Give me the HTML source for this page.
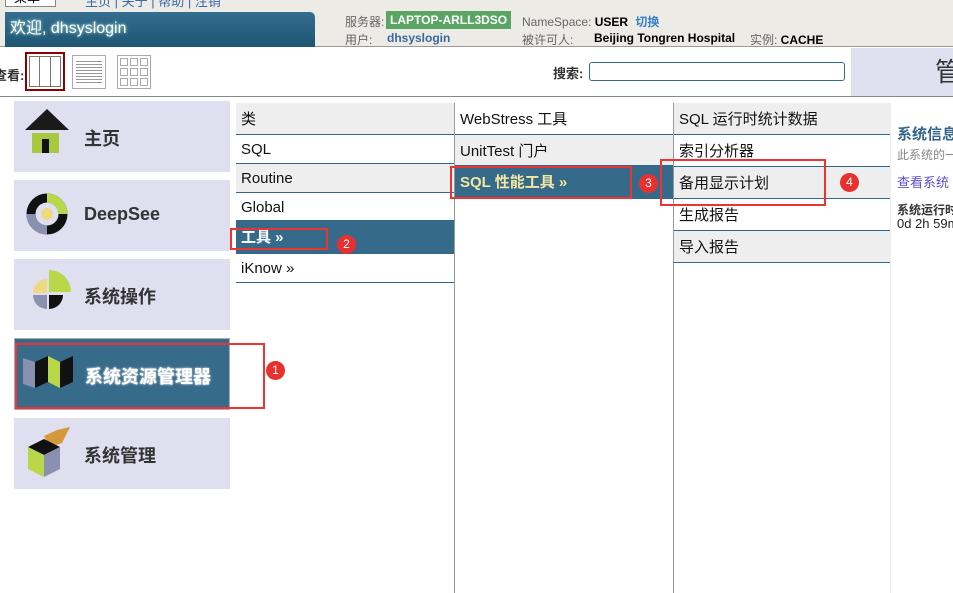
<!DOCTYPE html>
<html><head><meta charset="utf-8"><style>
*{margin:0;padding:0;box-sizing:border-box}
body{width:953px;height:593px;overflow:hidden;background:#fff;font-family:"Liberation Sans","Noto Sans CJK SC",sans-serif;position:relative}
.a{position:absolute;white-space:nowrap}
.tile{position:absolute;left:14px;width:216px;height:71px;background:#e0dff0}
.tile span{position:absolute;left:70px;top:24px;font-size:18px;font-weight:bold;color:#333}
.row{position:absolute;font-size:15px;color:#111;padding-left:5px;border-bottom:1px solid #336688;line-height:33px}
.g{background:#eee}.b{background:#356a8b;color:#fff}
.red{position:absolute;border:2px solid #ee3333}
.badge{position:absolute;width:19px;height:19px;border-radius:50%;background:#e8302f;color:#fff;font-size:12px;text-align:center;line-height:19px}
</style></head><body>
<div class="a" style="left:0;top:0;width:953px;height:47px;background:#ecebe6;border-bottom:1px solid #999"></div>
<div class="a" style="left:5px;top:-9px;width:51px;height:16px;border:1px solid #888;background:#fff;font-size:13px;line-height:12px;padding-left:8px">菜单</div>
<div class="a" style="left:85px;top:-9px;font-size:13px;color:#3a6aa8">主页 | 关于 | 帮助 | 注销</div>
<div class="a" style="left:5px;top:12px;width:310px;height:35px;background:linear-gradient(#356e90,#1d5572);border-radius:0 5px 0 0;color:#fff;font-size:16px;line-height:33px;padding-left:5px;text-shadow:0 0 3px #cfe">欢迎, dhsyslogin</div>
<div class="a" style="left:345px;top:13px;font-size:12px;color:#666">服务器:</div>
<div class="a" style="left:386px;top:11px;width:125px;height:18px;background:#5aa564;color:#fff;font-weight:bold;font-size:12px;line-height:18px;padding-left:4px">LAPTOP-ARLL3DSO</div>
<div class="a" style="left:522px;top:13px;font-size:12px;color:#666">NameSpace: <b style="color:#000">USER</b> <b style="color:#3a80c8;margin-left:4px">切换</b></div>
<div class="a" style="left:345px;top:31px;font-size:12px;color:#666">用户:</div>
<div class="a" style="left:387px;top:31px;font-size:12px;color:#3a6a9a;font-weight:bold">dhsyslogin</div>
<div class="a" style="left:522px;top:31px;font-size:12px;color:#666">被许可人:</div>
<div class="a" style="left:594px;top:31px;font-size:12px;color:#000;font-weight:bold">Beijing Tongren Hospital</div>
<div class="a" style="left:750px;top:31px;font-size:12px;color:#666">实例: <b style="color:#000">CACHE</b></div>
<div class="a" style="left:851px;top:48px;width:102px;height:48px;background:#e0dff0;font-size:26px;color:#333;padding-left:84px;line-height:48px">管</div>
<div class="a" style="left:0;top:96px;width:953px;border-top:1px solid #888"></div>
<div class="a" style="left:-6px;top:65px;font-size:13px;font-weight:bold;color:#333">查看:</div>
<div class="a" style="left:25px;top:52px;width:40px;height:39px;border:2px solid #8b0000;padding:2px"><div style="width:32px;height:31px;border:1px solid #777;display:flex"><i style="flex:1;border-right:1px solid #777"></i><i style="flex:1;border-right:1px solid #777"></i><i style="flex:1"></i></div></div>
<div class="a" style="left:72px;top:55px;width:34px;height:34px;border:1px solid #aaa;background:repeating-linear-gradient(#fff 0 2px,#999 2px 3px);background-clip:content-box;padding:3px"></div>
<div class="a" style="left:117px;top:55px;width:34px;height:34px;border:1px solid #aaa;padding:2px;display:grid;grid-template-columns:repeat(3,1fr);gap:2px"><i style="border:1px solid #aaa"></i><i style="border:1px solid #aaa"></i><i style="border:1px solid #aaa"></i><i style="border:1px solid #aaa"></i><i style="border:1px solid #aaa"></i><i style="border:1px solid #aaa"></i><i style="border:1px solid #aaa"></i><i style="border:1px solid #aaa"></i><i style="border:1px solid #aaa"></i></div>
<div class="a" style="left:553px;top:63px;font-size:13px;font-weight:bold;color:#333">搜索:</div>
<div class="a" style="left:589px;top:62px;width:256px;height:19px;border:1px solid #336b8f;border-radius:3px"></div>

<div class="tile" style="top:101px"><svg class="a" style="left:11px;top:8px" width="44" height="48"><polygon points="0,21 22,0 44,21" fill="#1a1a1a"/><rect x="7" y="24" width="27" height="20" fill="#a8c83e"/><rect x="17" y="30" width="7" height="14" fill="#111"/></svg><span>主页</span></div>
<div class="tile" style="top:180px"><svg class="a" style="left:11px;top:12px" width="44" height="44"><circle cx="22" cy="22" r="16" fill="none" stroke="#111" stroke-width="9"/><path d="M22 6A16 16 0 0 1 38 22" fill="none" stroke="#b8d84a" stroke-width="9"/><path d="M22 38A16 16 0 0 1 6 22" fill="none" stroke="#8a90b0" stroke-width="9"/><circle cx="22" cy="22" r="6" fill="#eed880"/></svg><span>DeepSee</span></div>
<div class="tile" style="top:259px"><svg class="a" style="left:13px;top:10px" width="44" height="48"><path d="M22 1A22 22 0 0 1 44 23H22Z" fill="#b8d84a"/><path d="M20 10A14 14 0 0 0 6 24H20Z" fill="#eed880"/><path d="M6 26A14 14 0 0 0 20 40V26Z" fill="#8a90b0"/><path d="M22 26V40A14 14 0 0 0 36 26Z" fill="#111"/></svg><span>系统操作</span></div>
<div class="tile" style="top:338px;height:72px;background:#376b8a;border:1px solid #aab"><svg class="a" style="left:8px;top:17px" width="52" height="34"><polygon points="0,2 12,6 12,32 0,28" fill="#8a90b0"/><polygon points="12,6 25,0 25,26 12,32" fill="#111"/><polygon points="25,0 37,6 37,32 25,26" fill="#b8d84a"/><polygon points="37,6 50,0 50,26 37,32" fill="#111"/></svg><span style="color:#fff;text-shadow:0 0 2px #fff">系统资源管理器</span></div>
<div class="tile" style="top:418px"><svg class="a" style="left:12px;top:7px" width="46" height="56"><polygon points="18,11 31,5 44,2 36,18 24,22" fill="#d4993a"/><polygon points="2,22 18,14 34,22 18,30" fill="#111"/><polygon points="2,22 18,30 18,52 2,44" fill="#b8d84a"/><polygon points="18,30 34,22 34,44 18,52" fill="#8a90b0"/></svg><span>系统管理</span></div>

<div class="a" style="left:454px;top:103px;height:490px;border-left:1px solid #999"></div>
<div class="a" style="left:673px;top:103px;height:490px;border-left:1px solid #999"></div>
<div class="a" style="left:890px;top:103px;height:490px;border-left:1px solid #eee"></div>

<div class="row g" style="left:236px;top:103px;width:218px;height:32px">类</div>
<div class="row" style="left:236px;top:135px;width:218px;height:29px;line-height:29px">SQL</div>
<div class="row g" style="left:236px;top:164px;width:218px;height:29px;line-height:29px">Routine</div>
<div class="row" style="left:236px;top:193px;width:218px;height:28px;line-height:29px">Global</div>
<div class="row b" style="left:236px;top:221px;width:218px;height:33px;font-weight:bold;line-height:34px">工具 »</div>
<div class="row" style="left:236px;top:254px;width:218px;height:29px;line-height:29px">iKnow »</div>

<div class="row" style="left:455px;top:103px;width:218px;height:32px">WebStress 工具</div>
<div class="row g" style="left:455px;top:135px;width:218px;height:31px">UnitTest 门户</div>
<div class="row b" style="left:455px;top:166px;width:218px;height:33px;font-weight:bold;color:#f2e6a0">SQL 性能工具 »</div>

<div class="row g" style="left:674px;top:103px;width:216px;height:32px">SQL 运行时统计数据</div>
<div class="row" style="left:674px;top:135px;width:216px;height:32px">索引分析器</div>
<div class="row g" style="left:674px;top:167px;width:216px;height:32px">备用显示计划</div>
<div class="row" style="left:674px;top:199px;width:216px;height:32px">生成报告</div>
<div class="row g" style="left:674px;top:231px;width:216px;height:32px">导入报告</div>

<div class="a" style="left:897px;top:123px;font-size:15px;font-weight:bold;color:#336688">系统信息</div>
<div class="a" style="left:897px;top:146px;font-size:12px;color:#888">此系统的一</div>
<div class="a" style="left:897px;top:172px;font-size:13px;color:#5a50c8">查看系统</div>
<div class="a" style="left:897px;top:201px;font-size:12px;font-weight:bold;color:#333">系统运行时</div>
<div class="a" style="left:897px;top:216px;font-size:13px;color:#222">0d 2h 59m</div>

<div class="red" style="left:15px;top:343px;width:250px;height:66px"></div>
<div class="badge" style="left:266px;top:361px">1</div>
<div class="red" style="left:230px;top:228px;width:98px;height:22px"></div>
<div class="badge" style="left:337px;top:235px">2</div>
<div class="red" style="left:450px;top:166px;width:182px;height:33px"></div>
<div class="badge" style="left:639px;top:174px">3</div>
<div class="red" style="left:660px;top:159px;width:166px;height:47px"></div>
<div class="badge" style="left:840px;top:173px">4</div>
</body></html>
